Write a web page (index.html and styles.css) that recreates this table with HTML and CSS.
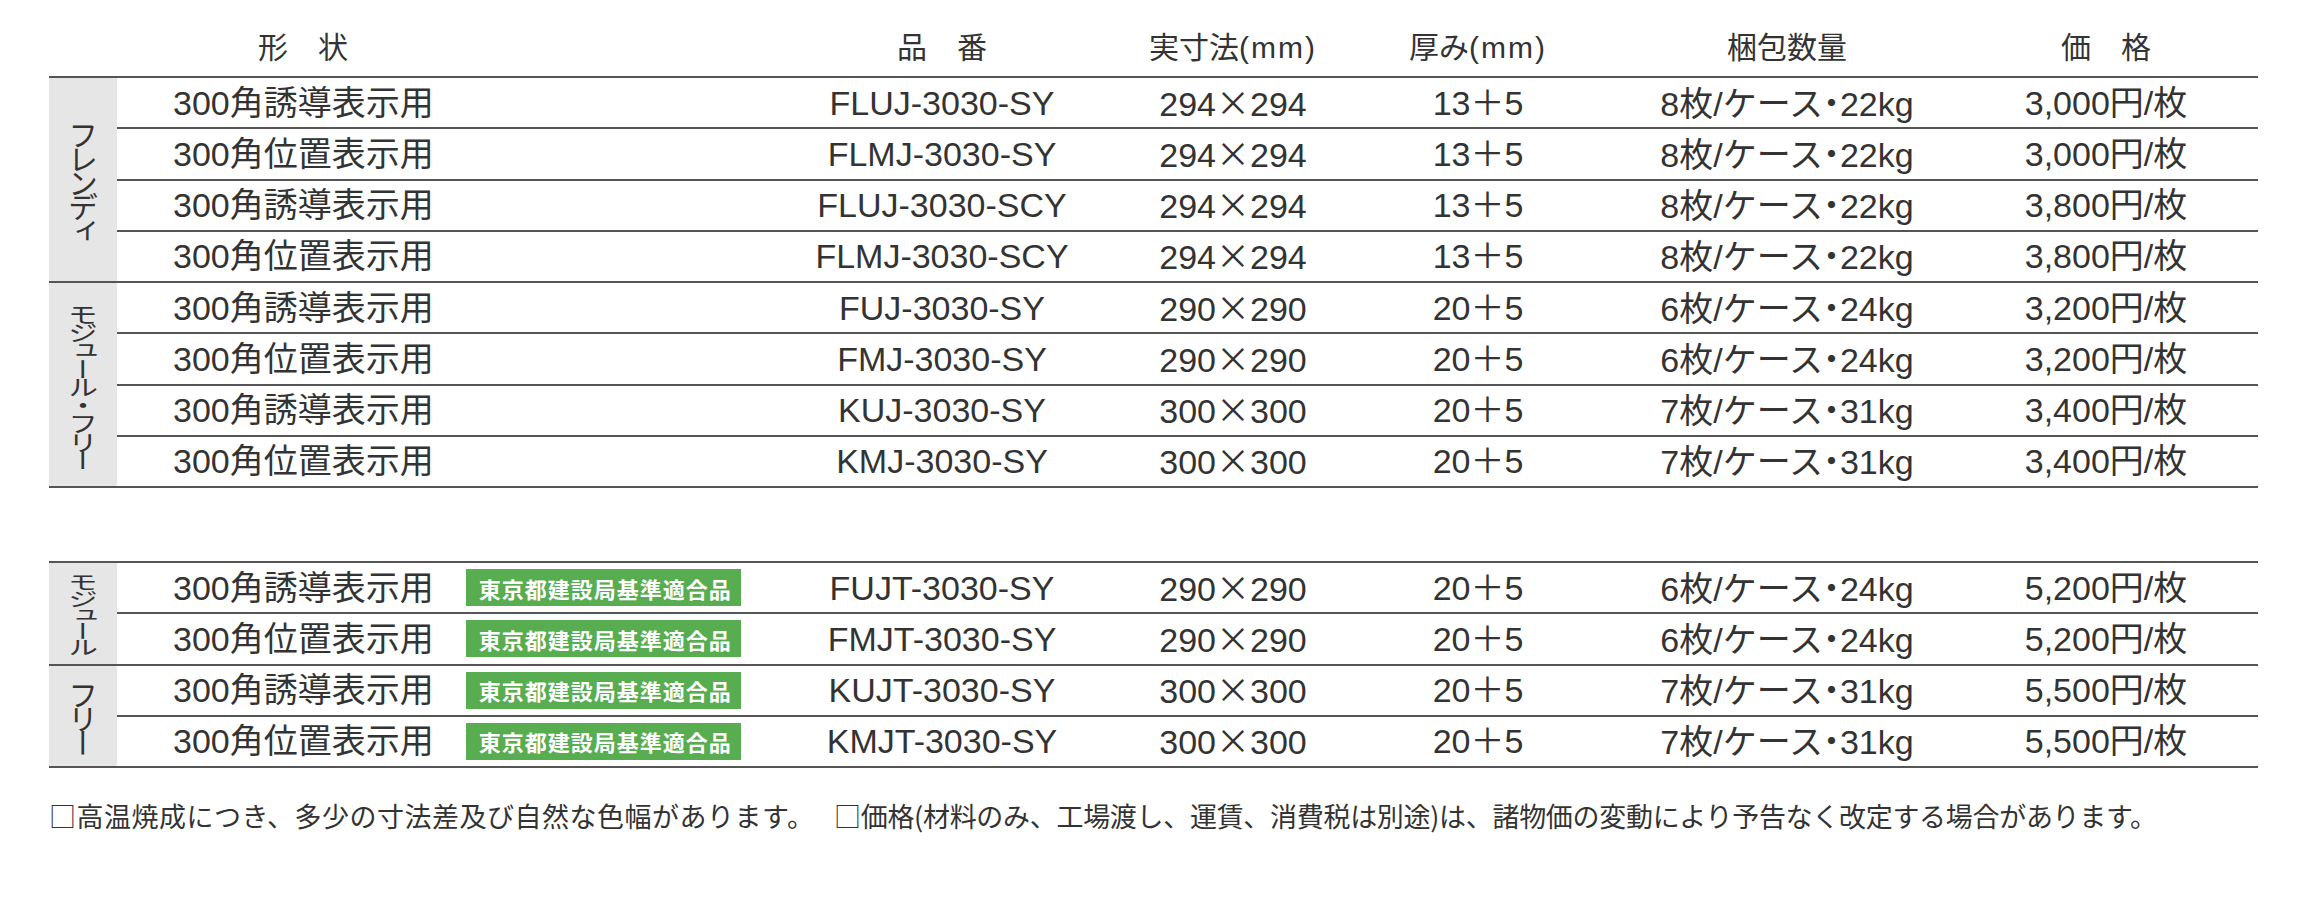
FILE: index.html
```html
<!DOCTYPE html>
<html lang="ja">
<head>
<meta charset="utf-8">
<title>価格表</title>
<link rel="stylesheet" href="styles.css">
</head>
<body>
<div class="page">
  <div class="head">
    <div></div>
    <div class="h-shape">形　状</div>
    <div>品　番</div>
    <div>実寸法<span class="mm">(mm)</span></div>
    <div>厚み<span class="mm">(mm)</span></div>
    <div>梱包数量</div>
    <div>価　格</div>
  </div>

  <div class="table">
    <div class="group">
      <div class="label"><span class="vt">フレンディ</span></div>
      <div class="rows">
        <div class="row">
          <div class="shape">300角誘導表示用</div>
          <div>FLUJ-3030-SY</div>
          <div>294<span class="cjk">×</span>294</div>
          <div>13＋5</div>
          <div>8枚/ケース<span class="dot">・</span>22kg</div>
          <div>3,000円/枚</div>
        </div>
        <div class="row">
          <div class="shape">300角位置表示用</div>
          <div>FLMJ-3030-SY</div>
          <div>294<span class="cjk">×</span>294</div>
          <div>13＋5</div>
          <div>8枚/ケース<span class="dot">・</span>22kg</div>
          <div>3,000円/枚</div>
        </div>
        <div class="row">
          <div class="shape">300角誘導表示用</div>
          <div>FLUJ-3030-SCY</div>
          <div>294<span class="cjk">×</span>294</div>
          <div>13＋5</div>
          <div>8枚/ケース<span class="dot">・</span>22kg</div>
          <div>3,800円/枚</div>
        </div>
        <div class="row">
          <div class="shape">300角位置表示用</div>
          <div>FLMJ-3030-SCY</div>
          <div>294<span class="cjk">×</span>294</div>
          <div>13＋5</div>
          <div>8枚/ケース<span class="dot">・</span>22kg</div>
          <div>3,800円/枚</div>
        </div>
      </div>
    </div>
    <div class="group">
      <div class="label"><span class="vt squeeze-a">モジュール・フリー</span></div>
      <div class="rows">
        <div class="row">
          <div class="shape">300角誘導表示用</div>
          <div>FUJ-3030-SY</div>
          <div>290<span class="cjk">×</span>290</div>
          <div>20＋5</div>
          <div>6枚/ケース<span class="dot">・</span>24kg</div>
          <div>3,200円/枚</div>
        </div>
        <div class="row">
          <div class="shape">300角位置表示用</div>
          <div>FMJ-3030-SY</div>
          <div>290<span class="cjk">×</span>290</div>
          <div>20＋5</div>
          <div>6枚/ケース<span class="dot">・</span>24kg</div>
          <div>3,200円/枚</div>
        </div>
        <div class="row">
          <div class="shape">300角誘導表示用</div>
          <div>KUJ-3030-SY</div>
          <div>300<span class="cjk">×</span>300</div>
          <div>20＋5</div>
          <div>7枚/ケース<span class="dot">・</span>31kg</div>
          <div>3,400円/枚</div>
        </div>
        <div class="row">
          <div class="shape">300角位置表示用</div>
          <div>KMJ-3030-SY</div>
          <div>300<span class="cjk">×</span>300</div>
          <div>20＋5</div>
          <div>7枚/ケース<span class="dot">・</span>31kg</div>
          <div>3,400円/枚</div>
        </div>
      </div>
    </div>
  </div>

  <div class="table table-second">
    <div class="group">
      <div class="label"><span class="vt squeeze-b">モジュール</span></div>
      <div class="rows">
        <div class="row">
          <div class="shape">300角誘導表示用<span class="badge">東京都建設局基準適合品</span></div>
          <div>FUJT-3030-SY</div>
          <div>290<span class="cjk">×</span>290</div>
          <div>20＋5</div>
          <div>6枚/ケース<span class="dot">・</span>24kg</div>
          <div>5,200円/枚</div>
        </div>
        <div class="row">
          <div class="shape">300角位置表示用<span class="badge">東京都建設局基準適合品</span></div>
          <div>FMJT-3030-SY</div>
          <div>290<span class="cjk">×</span>290</div>
          <div>20＋5</div>
          <div>6枚/ケース<span class="dot">・</span>24kg</div>
          <div>5,200円/枚</div>
        </div>
      </div>
    </div>
    <div class="group">
      <div class="label"><span class="vt">フリー</span></div>
      <div class="rows">
        <div class="row">
          <div class="shape">300角誘導表示用<span class="badge">東京都建設局基準適合品</span></div>
          <div>KUJT-3030-SY</div>
          <div>300<span class="cjk">×</span>300</div>
          <div>20＋5</div>
          <div>7枚/ケース<span class="dot">・</span>31kg</div>
          <div>5,500円/枚</div>
        </div>
        <div class="row">
          <div class="shape">300角位置表示用<span class="badge">東京都建設局基準適合品</span></div>
          <div>KMJT-3030-SY</div>
          <div>300<span class="cjk">×</span>300</div>
          <div>20＋5</div>
          <div>7枚/ケース<span class="dot">・</span>31kg</div>
          <div>5,500円/枚</div>
        </div>
      </div>
    </div>
  </div>

  <div class="notes">
    <div class="note-a">□高温焼成につき、多少の寸法差及び自然な色幅があります。</div>
    <div class="note-b">□価格(材料のみ、工場渡し、運賃、消費税は別途)は、諸物価の変動により予告なく改定する場合があります。</div>
  </div>
</div>
</body>
</html>
```

FILE: styles.css
```css
html, body {
  margin: 0;
  padding: 0;
  background: #ffffff;
}

body {
  font-family: "Liberation Sans", "Noto Sans CJK JP", sans-serif;
  color: #333333;
}

.page {
  width: 2209px;
  padding: 20px 0 0 49px;
}

.head {
  display: grid;
  grid-template-columns: 68px 683px 284px 298px 192px 426px 212px;
  height: 56px;
  align-items: center;
  text-align: center;
  font-size: 30px;
  line-height: 1;
}

.head .h-shape {
  text-align: left;
  padding-left: 141px;
}

.head .mm {
  letter-spacing: 2px;
}

.table {
  border-top: 2px solid #555555;
}

.table-second {
  margin-top: 73px;
}

.group {
  display: flex;
}

.label {
  width: 68px;
  flex: none;
  box-sizing: border-box;
  contain: size;
  background: #e6e6e6;
  border-bottom: 2px solid #555555;
  display: flex;
  align-items: center;
  justify-content: center;
}

.vt {
  writing-mode: vertical-rl;
  font-family: "Noto Sans CJK JP", sans-serif;
  font-size: 30px;
  letter-spacing: -6px;
  line-height: 1;
  color: #333333;
  white-space: nowrap;
}

.squeeze-a {
  transform: scaleY(0.76);
}

.squeeze-b {
  transform: scaleY(0.67);
}

.rows {
  flex: 1;
  display: flex;
  flex-direction: column;
}

.row {
  display: grid;
  grid-template-columns: 683px 284px 298px 192px 426px 212px;
  align-items: center;
  box-sizing: border-box;
  height: 51.25px;
  border-bottom: 2px solid #555555;
  font-size: 34px;
  line-height: 1;
  text-align: center;
  white-space: nowrap;
}

.row .shape {
  display: flex;
  align-items: center;
  text-align: left;
  padding-left: 56px;
  gap: 32px;
}

.cjk {
  font-family: "Noto Sans CJK JP", sans-serif;
}

.dot {
  font-family: "Noto Sans CJK JP", sans-serif;
  font-feature-settings: "halt";
}

.badge {
  display: inline-flex;
  align-items: center;
  height: 37px;
  padding: 0 9px 0 13px;
  background: #57ad50;
  color: #ffffff;
  font-family: "Noto Sans CJK JP", sans-serif;
  font-weight: 700;
  font-size: 22px;
  letter-spacing: 1px;
}

.notes {
  display: grid;
  grid-template-columns: 785px auto;
  margin-top: 30px;
  font-family: "Noto Sans CJK JP", sans-serif;
  font-size: 27px;
  line-height: 36px;
  white-space: nowrap;
}

.note-a {
  letter-spacing: 0.5px;
}

.note-b {
  letter-spacing: -0.3px;
}
```
